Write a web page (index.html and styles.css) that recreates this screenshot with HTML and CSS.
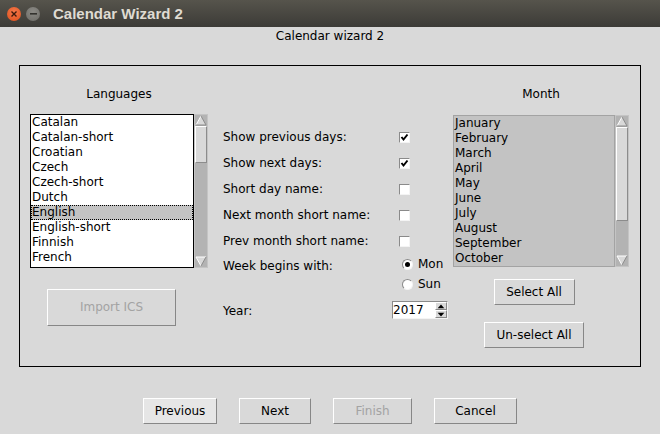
FILE: index.html
```html
<!DOCTYPE html>
<html>
<head>
<meta charset="utf-8">
<link rel="stylesheet" href="styles.css">
</head>
<body>
<div class="titlebar">
  <span class="wbtn wbtn-close"><svg width="6" height="6" viewBox="0 0 6 6"><path d="M0.5 0.5 L5.5 5.5 M5.5 0.5 L0.5 5.5" stroke="#3b1a0c" stroke-width="1.4"/></svg></span>
  <span class="wbtn wbtn-min"><svg width="7" height="2" viewBox="0 0 7 2"><rect x="0" y="0" width="7" height="1.6" fill="#33322e"/></svg></span>
  <span class="title">Calendar Wizard 2</span>
</div>
<div class="heading">Calendar wizard 2</div>
<div class="frame">
  <div class="col-left">
    <div class="col-label">Languages</div>
    <div class="listwrap">
      <div class="listbox">
        <div class="item">Catalan</div>
        <div class="item">Catalan-short</div>
        <div class="item">Croatian</div>
        <div class="item">Czech</div>
        <div class="item">Czech-short</div>
        <div class="item">Dutch</div>
        <div class="item sel">English</div>
        <div class="item">English-short</div>
        <div class="item">Finnish</div>
        <div class="item">French</div>
      </div>
      <div class="scroll">
        <svg class="arrow" width="12" height="11" viewBox="0 0 12 11"><polygon points="6,1 11,10 1,10" fill="#d9d9d9"/><polyline points="1,10 6,1" stroke="#fff" fill="none"/><polyline points="6,1 11,10 1,10" stroke="#8c8c8c" fill="none"/></svg>
        <div class="track"><div class="thumb thumb-lang"></div></div>
        <svg class="arrow" width="12" height="11" viewBox="0 0 12 11"><polygon points="1,1 11,1 6,10" fill="#d9d9d9"/><polyline points="11,1 1,1 6,10" stroke="#fff" fill="none"/><polyline points="6,10 11,1" stroke="#8c8c8c" fill="none"/></svg>
      </div>
    </div>
    <button class="btn btn-import" disabled>Import ICS</button>
  </div>

  <div class="col-mid">
    <div class="row"><span class="lbl">Show previous days:</span><span class="check"><svg width="9" height="9" viewBox="0 0 9 9"><polyline points="1.5,4 3.5,6.5 7.5,1.5" stroke="#000" stroke-width="2" fill="none"/></svg></span></div>
    <div class="row"><span class="lbl">Show next days:</span><span class="check"><svg width="9" height="9" viewBox="0 0 9 9"><polyline points="1.5,4 3.5,6.5 7.5,1.5" stroke="#000" stroke-width="2" fill="none"/></svg></span></div>
    <div class="row"><span class="lbl">Short day name:</span><span class="check"></span></div>
    <div class="row"><span class="lbl">Next month short name:</span><span class="check"></span></div>
    <div class="row"><span class="lbl">Prev month short name:</span><span class="check"></span></div>
    <div class="row-week">
      <span class="lbl lbl-week">Week begins with:</span>
      <div class="radios">
        <div class="radio"><span class="rcircle"><span class="rdot"></span></span><span>Mon</span></div>
        <div class="radio"><span class="rcircle"></span><span>Sun</span></div>
      </div>
    </div>
    <div class="row-year">
      <span class="lbl lbl-year">Year:</span>
      <div class="spin">
        <span class="spin-val">2017</span>
        <div class="spin-btns">
          <span class="spin-b"><svg width="9" height="6" viewBox="0 0 9 6"><polygon points="4.5,0.5 8.5,5 0.5,5" fill="#000"/></svg></span>
          <span class="spin-b"><svg width="9" height="6" viewBox="0 0 9 6"><polygon points="0.5,1 8.5,1 4.5,5.5" fill="#000"/></svg></span>
        </div>
      </div>
    </div>
  </div>

  <div class="col-right">
    <div class="col-label">Month</div>
    <div class="listwrap listwrap-month">
      <div class="listbox listbox-month">
        <div class="item">January</div>
        <div class="item">February</div>
        <div class="item">March</div>
        <div class="item">April</div>
        <div class="item">May</div>
        <div class="item">June</div>
        <div class="item">July</div>
        <div class="item">August</div>
        <div class="item">September</div>
        <div class="item">October</div>
      </div>
      <div class="scroll">
        <svg class="arrow" width="12" height="11" viewBox="0 0 12 11"><polygon points="6,1 11,10 1,10" fill="#d9d9d9"/><polyline points="1,10 6,1" stroke="#fff" fill="none"/><polyline points="6,1 11,10 1,10" stroke="#8c8c8c" fill="none"/></svg>
        <div class="track"><div class="thumb thumb-month"></div></div>
        <svg class="arrow" width="12" height="11" viewBox="0 0 12 11"><polygon points="1,1 11,1 6,10" fill="#d9d9d9"/><polyline points="11,1 1,1 6,10" stroke="#fff" fill="none"/><polyline points="6,10 11,1" stroke="#8c8c8c" fill="none"/></svg>
      </div>
    </div>
    <div class="month-btns">
      <button class="btn btn-selall">Select All</button>
      <button class="btn btn-unsel">Un-select All</button>
    </div>
  </div>
</div>
<div class="footer">
  <button class="btn btn-prev">Previous</button>
  <button class="btn btn-next">Next</button>
  <button class="btn btn-finish" disabled>Finish</button>
  <button class="btn btn-cancel">Cancel</button>
</div>
</body>
</html>
```
FILE: styles.css
```css
* { box-sizing: border-box; }
html, body { margin: 0; padding: 0; }
body {
  width: 660px;
  height: 434px;
  background: #d9d9d9;
  font-family: "DejaVu Sans", sans-serif;
  font-size: 12px;
  line-height: 15px;
  color: #000;
  overflow: hidden;
}

.titlebar {
  height: 27px;
  background: linear-gradient(#56544c, #3c3b37);
  display: flex;
  align-items: center;
  padding-left: 7px;
}
.wbtn {
  width: 14px;
  height: 14px;
  border-radius: 50%;
  display: flex;
  align-items: center;
  justify-content: center;
}
.wbtn-close { background: radial-gradient(circle at 50% 35%, #f3784a, #df4f1b); }
.wbtn-min { background: radial-gradient(circle at 50% 35%, #8c8b86, #6c6b66); margin-left: 5px; }
.title {
  margin-left: 13px;
  font: bold 15px/27px "Liberation Sans", sans-serif;
  color: #dfdbd2;
}

.heading {
  height: 38px;
  padding-top: 2px;
  text-align: center;
}

.frame {
  margin-left: 19px;
  width: 622px;
  height: 302px;
  border: 1px solid #000;
  display: flex;
  padding: 21px 10px 0;
}

.col-left {
  width: 178px;
  display: flex;
  flex-direction: column;
  align-items: flex-start;
}
.col-label { text-align: center; width: 100%; }

.listwrap { display: flex; margin-top: 12px; height: 154px; }
.listbox {
  width: 164px;
  border: 1px solid #000;
  background: #fff;
}
.item { padding-left: 1px; height: 15px; white-space: nowrap; }
.item.sel {
  background: #c3c3c3;
  outline: 1px dotted #000;
  outline-offset: -1px;
}

.scroll {
  width: 14px;
  background: #b3b3b3;
  border: 1px solid #c4c4c4;
  display: flex;
  flex-direction: column;
}
.arrow { display: block; flex: none; }
.track { flex: 1; }
.thumb {
  background: #d9d9d9;
  border: 1px solid;
  border-color: #fff #8c8c8c #8c8c8c #fff;
}
.thumb-lang { height: 37px; }
.thumb-month { height: 94px; }

.btn {
  height: 26px;
  padding: 0;
  background: #d9d9d9;
  border: 1px solid;
  border-color: #fff #878787 #878787 #fff;
  font-family: "DejaVu Sans", sans-serif;
  font-size: 12px;
  line-height: 15px;
  color: #000;
}
.btn:disabled { color: #a3a3a3; }
.btn-import { margin-top: 21px; margin-left: 17px; width: 129px; height: 37px; }

.col-mid {
  width: 225px;
  margin-left: 15px;
  padding-top: 37px;
}
.row { display: flex; align-items: center; height: 26px; }
.lbl { width: 176px; flex: none; }
.check {
  width: 11px;
  height: 11px;
  background: #fff;
  border: 1px solid;
  border-color: #8a8a8a #f4f4f4 #f4f4f4 #8a8a8a;
  display: flex;
}
.check svg { display: block; }

.row-week { display: flex; align-items: flex-start; height: 40px; }
.lbl-week { margin-top: 5px; }
.radios { display: flex; flex-direction: column; }
.radio { height: 20px; display: flex; align-items: center; padding-left: 3px; gap: 5px; }
.rcircle {
  width: 11px;
  height: 11px;
  border-radius: 50%;
  background: #fff;
  border: 1px solid;
  border-color: #8a8a8a #f4f4f4 #f4f4f4 #8a8a8a;
  display: flex;
  align-items: center;
  justify-content: center;
}
.rdot { width: 5px; height: 5px; border-radius: 50%; background: #000; }

.row-year { display: flex; align-items: flex-start; margin-top: 7px; }
.lbl-year { width: 169px; margin-top: 3px; }
.spin {
  width: 56px;
  height: 18px;
  background: #fff;
  border: 1px solid;
  border-color: #8a8a8a #f4f4f4 #f4f4f4 #8a8a8a;
  display: flex;
  justify-content: space-between;
}
.spin-val { line-height: 16px; padding-left: 0; }
.spin-btns { width: 12px; display: flex; flex-direction: column; }
.spin-b {
  flex: 1;
  background: #d9d9d9;
  border: 1px solid;
  border-color: #fff #878787 #878787 #fff;
  display: flex;
  align-items: center;
  justify-content: center;
}
.spin-b svg { display: block; width: 8px; height: 5px; }

.col-right {
  width: 176px;
  margin-left: 5px;
  display: flex;
  flex-direction: column;
}
.listwrap-month { margin-top: 13px; height: 152px; }
.listbox-month {
  width: 162px;
  background: #c3c3c3;
  border: 1px solid #a3a3a3;
}
.month-btns {
  width: 162px;
  margin-top: 12px;
  display: flex;
  flex-direction: column;
  align-items: center;
  gap: 17px;
}
.btn-selall { width: 81px; }
.btn-unsel { width: 100px; }

.footer {
  margin-top: 31px;
  display: flex;
  justify-content: center;
  gap: 22px;
}
.btn-prev { width: 74px; background: #e6e6e6; }
.btn-next { width: 72px; }
.btn-finish { width: 79px; }
.btn-cancel { width: 83px; }
```
